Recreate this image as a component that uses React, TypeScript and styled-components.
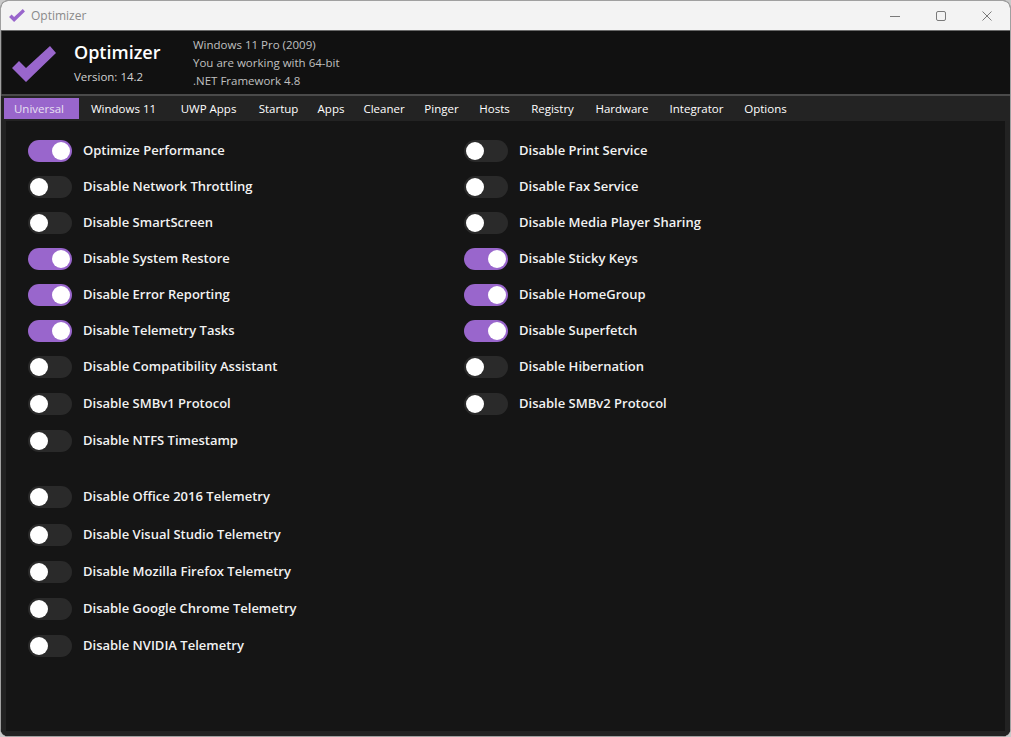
import React from 'react';
import styled, { createGlobalStyle } from 'styled-components';

const TABS: [string, number][] = [
  ['Universal', 75],
  ['Windows 11', 89],
  ['UWP Apps', 81],
  ['Startup', 59],
  ['Apps', 46],
  ['Cleaner', 60],
  ['Pinger', 55],
  ['Hosts', 51],
  ['Registry', 65],
  ['Hardware', 74],
  ['Integrator', 75],
  ['Options', 63],
];

type Option = { label: string; on?: boolean; pitch?: number };

const LEFT_OPTIONS: Option[] = [
  { label: 'Optimize Performance', on: true },
  { label: 'Disable Network Throttling' },
  { label: 'Disable SmartScreen' },
  { label: 'Disable System Restore', on: true },
  { label: 'Disable Error Reporting', on: true },
  { label: 'Disable Telemetry Tasks', on: true },
  { label: 'Disable Compatibility Assistant', pitch: 37 },
  { label: 'Disable SMBv1 Protocol', pitch: 37 },
  { label: 'Disable NTFS Timestamp', pitch: 56 },
  { label: 'Disable Office 2016 Telemetry', pitch: 38 },
  { label: 'Disable Visual Studio Telemetry', pitch: 37 },
  { label: 'Disable Mozilla Firefox Telemetry', pitch: 37 },
  { label: 'Disable Google Chrome Telemetry', pitch: 37 },
  { label: 'Disable NVIDIA Telemetry' },
];

const RIGHT_OPTIONS: Option[] = [
  { label: 'Disable Print Service' },
  { label: 'Disable Fax Service' },
  { label: 'Disable Media Player Sharing' },
  { label: 'Disable Sticky Keys', on: true },
  { label: 'Disable HomeGroup', on: true },
  { label: 'Disable Superfetch', on: true },
  { label: 'Disable Hibernation', pitch: 37 },
  { label: 'Disable SMBv2 Protocol' },
];

const CheckMark: React.FC<{ width: number; height: number }> = ({ width, height }) => (
  <svg width={width} height={height} viewBox="0 0 44 36" aria-hidden="true">
    <path d="M0 22 L7 15 L14 22 L38 0 L44 7 L14 36 Z" fill="#9966cc" />
  </svg>
);

const OptionList: React.FC<{ options: Option[] }> = ({ options }) => (
  <Column>
    {options.map((o) => (
      <Row key={o.label} $pitch={o.pitch ?? 36}>
        <Toggle $on={!!o.on}>
          <Knob />
        </Toggle>
        <RowLabel>{o.label}</RowLabel>
      </Row>
    ))}
  </Column>
);

export default function App() {
  return (
    <Window>
      <GlobalStyle />
      <TitleBar>
        <TitleLeft>
          <CheckMark width={16} height={13} />
          <TitleText>Optimizer</TitleText>
        </TitleLeft>
        <WindowControls>
          <ControlButton>
            <svg width="10" height="10" viewBox="0 0 10 10"><path d="M0 5.5H10" stroke="#7a7a7a" /></svg>
          </ControlButton>
          <ControlButton>
            <svg width="10" height="10" viewBox="0 0 10 10"><rect x="0.5" y="0.5" width="9" height="9" rx="1.5" fill="none" stroke="#7a7a7a" /></svg>
          </ControlButton>
          <ControlButton>
            <svg width="10" height="10" viewBox="0 0 10 10"><path d="M0.5 0.5L9.5 9.5M9.5 0.5L0.5 9.5" stroke="#7a7a7a" /></svg>
          </ControlButton>
        </WindowControls>
      </TitleBar>
      <Header>
        <LogoSlot>
          <CheckMark width={44} height={36} />
        </LogoSlot>
        <Brand>
          <BrandName>Optimizer</BrandName>
          <Version>Version: 14.2</Version>
        </Brand>
        <SystemInfo>
          <div>Windows 11 Pro (2009)</div>
          <div>You are working with 64-bit</div>
          <div>.NET Framework 4.8</div>
        </SystemInfo>
      </Header>
      <TabBar>
        {TABS.map(([name, width], i) => (
          <Tab key={name} $active={i === 0} $width={width}>
            {name}
          </Tab>
        ))}
      </TabBar>
      <Content>
        <OptionList options={LEFT_OPTIONS} />
        <OptionList options={RIGHT_OPTIONS} />
      </Content>
    </Window>
  );
}

const GlobalStyle = createGlobalStyle`
  html, body {
    margin: 0;
    padding: 0;
    background: #c9c9c9;
  }
  * {
    box-sizing: border-box;
  }
`;

const Window = styled.div`
  width: 1011px;
  height: 737px;
  display: flex;
  flex-direction: column;
  overflow: hidden;
  border: 1px solid #a0a0a0;
  border-radius: 8px;
  background: #151515;
  font-family: 'Open Sans', 'Noto Sans', sans-serif;
`;

const TitleBar = styled.div`
  height: 30px;
  flex-shrink: 0;
  display: flex;
  align-items: center;
  justify-content: space-between;
  background: #f3f3f3;
  border-bottom: 1px solid #6a6a6a;
`;

const TitleLeft = styled.div`
  display: flex;
  align-items: center;
  gap: 6px;
  padding-left: 8px;
`;

const TitleText = styled.span`
  font-size: 12px;
  color: #8a8a8a;
`;

const WindowControls = styled.div`
  display: flex;
  align-items: center;
`;

const ControlButton = styled.div`
  width: 46px;
  height: 29px;
  display: flex;
  align-items: center;
  justify-content: center;
`;

const Header = styled.div`
  height: 63px;
  flex-shrink: 0;
  display: flex;
  align-items: flex-start;
  background: #111111;
  border-left: 1px solid #3a3a3a;
`;

const LogoSlot = styled.div`
  width: 72px;
  padding: 15px 0 0 10px;
`;

const Brand = styled.div`
  width: 119px;
  padding-top: 9px;
`;

const BrandName = styled.div`
  font-size: 18px;
  font-weight: 600;
  line-height: 24px;
  color: #ffffff;
`;

const Version = styled.div`
  font-size: 11.5px;
  line-height: 16px;
  margin-top: 5px;
  color: #d0d0d0;
`;

const SystemInfo = styled.div`
  padding-top: 5px;
  font-size: 11.5px;
  line-height: 18px;
  color: #c0c0c0;
`;

const TabBar = styled.div`
  height: 27px;
  flex-shrink: 0;
  display: flex;
  align-items: flex-start;
  padding: 2px 0 0 3px;
  background: #232323;
  border-top: 2px solid #4a4a4a;
`;

const Tab = styled.div<{ $active: boolean; $width: number }>`
  width: ${(p) => p.$width}px;
  height: 21px;
  display: flex;
  align-items: center;
  justify-content: center;
  padding-right: ${(p) => (p.$active ? 5 : 0)}px;
  font-size: 11.5px;
  font-weight: 400;
  color: ${(p) => (p.$active ? '#e8e0f2' : '#ffffff')};
  background: ${(p) => (p.$active ? '#9966cc' : 'transparent')};
`;

const Content = styled.div`
  flex: 1;
  display: grid;
  grid-template-columns: 436px 1fr;
  padding: 18px 0 0 22px;
  background: #151515;
  border-left: 5px solid #222222;
  border-right: 5px solid #222222;
  border-bottom: 5px solid #222222;
`;

const Column = styled.div`
  display: flex;
  flex-direction: column;
`;

const Row = styled.div<{ $pitch: number }>`
  height: ${(p) => p.$pitch}px;
  display: flex;
  align-items: flex-start;
  gap: 11px;
`;

const Toggle = styled.div<{ $on: boolean }>`
  width: 44px;
  height: 22px;
  margin-top: 1px;
  display: flex;
  align-items: center;
  justify-content: ${(p) => (p.$on ? 'flex-end' : 'flex-start')};
  padding: 0 2px;
  border-radius: 11px;
  background: ${(p) => (p.$on ? '#9966cc' : '#2a2a2a')};
`;

const Knob = styled.div`
  width: 18px;
  height: 18px;
  border-radius: 50%;
  background: #ffffff;
`;

const RowLabel = styled.span`
  font-size: 13px;
  font-weight: 600;
  line-height: 22px;
  color: #f2f2f2;
`;
